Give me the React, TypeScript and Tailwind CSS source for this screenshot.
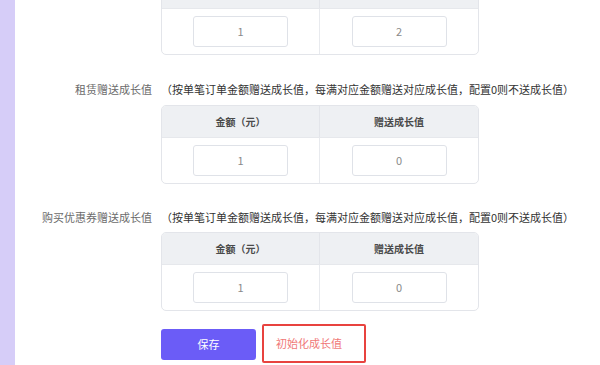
import React from "react";

function GrowthTable({ left, right }: { left: string; right: string }) {
  return (
    <div className="w-[318px] border border-[#e3e5ea] rounded-[5px] overflow-hidden bg-white">
      <div className="grid grid-cols-2 h-[32px] bg-[#eef0f3] border-b border-[#e6e8ec] text-[10px] font-semibold text-[#4a4a4a]">
        <div className="flex items-center justify-center border-r border-[#e3e5ea]">金额（元）</div>
        <div className="flex items-center justify-center">赠送成长值</div>
      </div>
      <div className="grid grid-cols-2 h-[45px]">
        <div className="flex items-center justify-center border-r border-[#e8eaee]">
          <div className="w-[95px] h-[31px] border border-[#dfe2e8] rounded-[3px] flex items-center justify-center text-[11px] text-[#8a8a8a]">
            {left}
          </div>
        </div>
        <div className="flex items-center justify-center">
          <div className="w-[95px] h-[31px] border border-[#dfe2e8] rounded-[3px] flex items-center justify-center text-[11px] text-[#8a8a8a]">
            {right}
          </div>
        </div>
      </div>
    </div>
  );
}

const desc = "（按单笔订单金额赠送成长值，每满对应金额赠送对应成长值，配置0则不送成长值）";

export default function App() {
  return (
    <div className="flex w-[600px] h-[365px] overflow-hidden bg-white font-['Noto_Sans_CJK_SC','Noto_Sans',sans-serif]">
      <div className="w-[15px] shrink-0 bg-[#d6cdf8]" />
      <div className="flex-1 flex flex-col">
        {/* first (cut off) table */}
        <div className="flex -mt-[24px]">
          <div className="w-[146px] shrink-0" />
          <GrowthTable left="1" right="2" />
        </div>

        {/* rental */}
        <div className="flex mt-[26px]">
          <div className="w-[146px] shrink-0 pr-[9px] text-right text-[11px] leading-[16px] text-[#6b6b6b]">
            租赁赠送成长值
          </div>
          <div className="flex flex-col gap-[8px]">
            <div className="text-[11px] leading-[16px] text-[#333] whitespace-nowrap">{desc}</div>
            <GrowthTable left="1" right="0" />
          </div>
        </div>

        {/* coupon */}
        <div className="flex mt-[25px]">
          <div className="w-[146px] shrink-0 pr-[9px] text-right text-[11px] leading-[16px] text-[#6b6b6b] whitespace-nowrap">
            购买优惠券赠送成长值
          </div>
          <div className="flex flex-col gap-[7px]">
            <div className="text-[11px] leading-[16px] text-[#333] whitespace-nowrap">{desc}</div>
            <GrowthTable left="1" right="0" />
          </div>
        </div>

        {/* buttons */}
        <div className="flex mt-[13px]">
          <div className="w-[146px] shrink-0" />
          <div className="flex items-start gap-[6px]">
            <button className="mt-[5px] w-[95px] h-[31px] rounded-[3px] bg-[#6b5cf7] text-white text-[11px] flex items-center justify-center">
              保存
            </button>
            <button className="w-[104px] h-[39px] rounded-[2px] border-2 border-[#e8433f] bg-white text-[11px] text-[#f07878] flex items-center pl-[12px]">
              初始化成长值
            </button>
          </div>
        </div>
      </div>
    </div>
  );
}
